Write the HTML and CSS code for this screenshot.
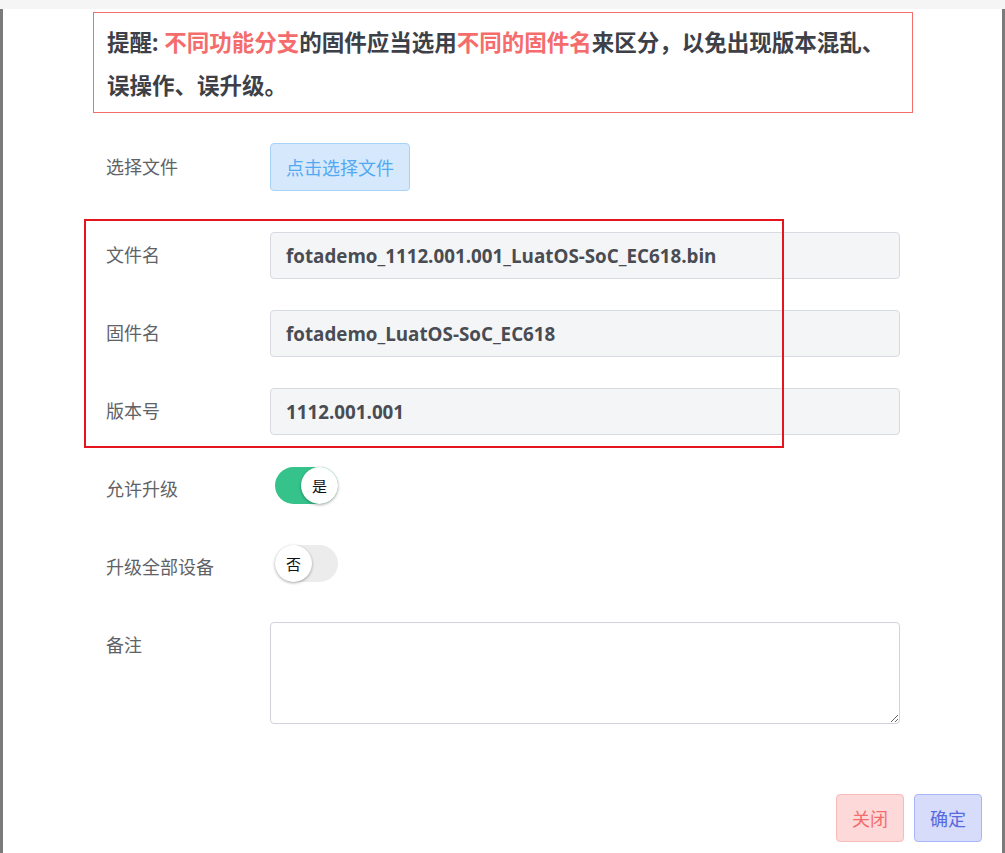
FILE: index.html
```html
<!DOCTYPE html>
<html>
<head>
    <title>上传固件</title>
    <link rel="stylesheet" href="styles.css">
</head>
<body>
    <div class="modal">
        <div class="notice">
            提醒: <span class="hl">不同功能分支</span>的固件应当选用<span class="hl">不同的固件名</span>来区分，以免出现版本混乱、误操作、误升级。
        </div>

        <div class="form">
            <div class="row row-file">
                <label class="label">选择文件</label>
                <button class="btn-file">点击选择文件</button>
            </div>
            <div class="row">
                <label class="label">文件名</label>
                <input class="field" type="text" value="fotademo_1112.001.001_LuatOS-SoC_EC618.bin" disabled>
            </div>
            <div class="row">
                <label class="label">固件名</label>
                <input class="field" type="text" value="fotademo_LuatOS-SoC_EC618" disabled>
            </div>
            <div class="row">
                <label class="label">版本号</label>
                <input class="field" type="text" value="1112.001.001" disabled>
            </div>
            <div class="row">
                <label class="label">允许升级</label>
                <div class="switch on"><span class="knob">是</span></div>
            </div>
            <div class="row">
                <label class="label">升级全部设备</label>
                <div class="switch"><span class="knob">否</span></div>
            </div>
            <div class="row row-top">
                <label class="label">备注</label>
                <textarea class="memo"></textarea>
            </div>
        </div>

        <div class="footer">
            <button class="btn btn-close">关闭</button>
            <button class="btn btn-ok">确定</button>
        </div>

        <!-- annotation box drawn over the screenshot -->
        <div class="mark"></div>
    </div>
</body>
</html>
```

FILE: styles.css
```css
body {
    margin: 0;
    background-color: #f5f5f5;
    font-family: "Open Sans", "Noto Sans CJK SC", sans-serif;
    overflow: hidden;
}
.modal {
    position: relative;
    margin-top: 9px;
    height: 844px;
    background: #ffffff;
    border-left: 3px solid #7b7b7b;
    border-right: 3px solid #7b7b7b;
    padding-top: 3px;
    box-sizing: border-box;
}
.notice {
    margin-left: 90px;
    width: 820px;
    box-sizing: border-box;
    border: 1px solid #f26d6d;
    padding: 8px 20px 5px 13px;
    font-size: 22.5px;
    line-height: 43px;
    font-weight: 700;
    color: #3d4047;
}
.notice .hl {
    color: #f56c6c;
}
.form {
    margin-left: 103px;
    margin-top: 31px;
    display: flex;
    flex-direction: column;
    gap: 31px;
}
.row {
    display: flex;
    align-items: center;
}
.row-file {
    margin-bottom: 10px;
}
.row-top {
    align-items: flex-start;
}
.label {
    width: 164px;
    flex-shrink: 0;
    font-size: 18px;
    line-height: 47px;
    color: #606266;
}
.btn-file {
    height: 48px;
    margin-top: -1px;
    padding: 0 15px;
    background: #d5e8fc;
    border: 1px solid #a9d2f8;
    border-radius: 4px;
    color: #53a8f2;
    font-family: inherit;
    font-size: 18px;
}
.field {
    width: 630px;
    height: 47px;
    box-sizing: border-box;
    padding: 0 15px;
    background: #f4f5f7;
    border: 1px solid #d7dae0;
    border-radius: 4px;
    font-family: inherit;
    font-size: 18.8px;
    font-weight: 700;
    color: #494c52;
}
.switch {
    position: relative;
    align-self: flex-start;
    width: 63px;
    height: 37px;
    margin: 1px 0 0 5px;
    border-radius: 19px;
    background: #ececec;
}
.switch.on {
    background: #35c38b;
}
.knob {
    position: absolute;
    left: 0;
    top: 0;
    width: 37px;
    height: 37px;
    border-radius: 50%;
    background: #ffffff;
    box-shadow: 0 1px 3px rgba(0, 0, 0, 0.35);
    display: flex;
    justify-content: center;
    align-items: center;
    font-size: 15px;
    color: #111;
}
.switch.on .knob {
    left: 26px;
}
.memo {
    width: 630px;
    height: 102px;
    box-sizing: border-box;
    border: 1px solid #d0d3d9;
    border-radius: 4px;
    margin: 0;
}
.footer {
    display: flex;
    justify-content: flex-end;
    gap: 10px;
    margin-top: 70px;
    margin-right: 20px;
}
.btn {
    width: 68px;
    height: 48px;
    border-radius: 4px;
    font-family: inherit;
    font-size: 18px;
}
.btn-close {
    background: #fdd9d9;
    border: 1px solid #fbbaba;
    color: #f46d6d;
}
.btn-ok {
    background: #d6dcfa;
    border: 1px solid #a8b5f7;
    color: #5669de;
}
.mark {
    position: absolute;
    left: 81px;
    top: 210px;
    width: 700px;
    height: 229px;
    box-sizing: border-box;
    border: 2px solid #e5151d;
}
```
